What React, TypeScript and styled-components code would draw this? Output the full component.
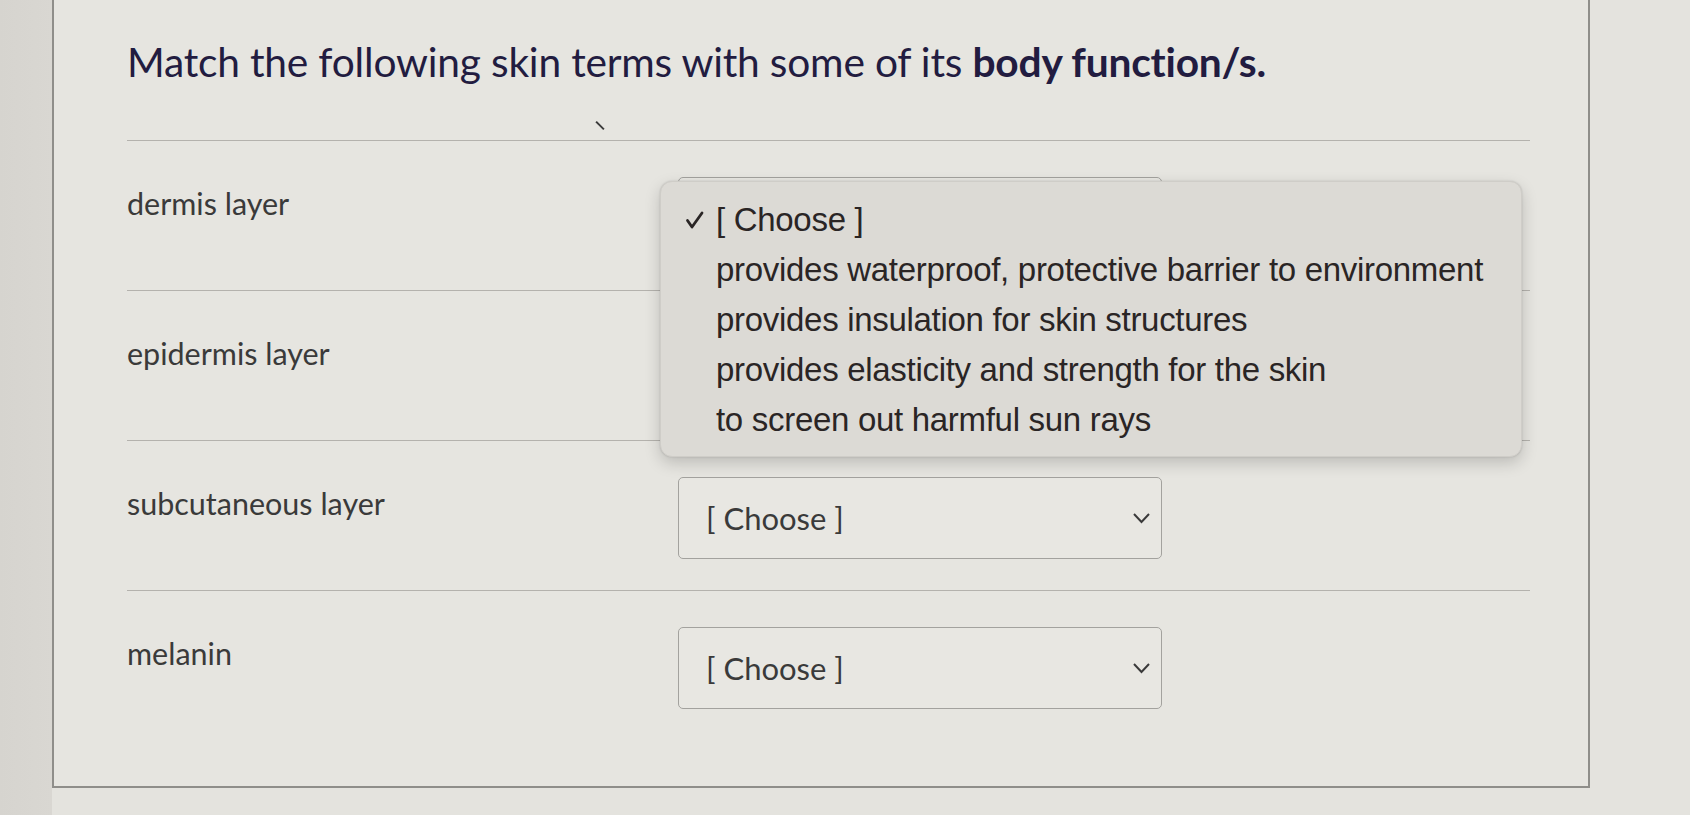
import React from "react";
import styled, { createGlobalStyle } from "styled-components";

const GlobalStyle = createGlobalStyle`
  html, body { margin: 0; padding: 0; }
  body {
    background: #d8d6d1;
    font-family: Lato, "Open Sans", sans-serif;
    overflow: hidden;
  }
`;

const Page = styled.div`
  width: 1690px;
  height: 815px;
  display: flex;
  align-items: flex-start;
  padding-left: 52px;
  box-sizing: border-box;
  background: linear-gradient(90deg, #d6d4cf 0px, #d9d7d2 52px, #e4e3de 52px);
`;

const Card = styled.div`
  position: relative;
  width: 1538px;
  height: 788px;
  box-sizing: border-box;
  background: #e6e5e0;
  border-left: 2px solid #8f8e8a;
  border-right: 2px solid #8f8e8a;
  border-bottom: 2px solid #8f8e8a;
  padding: 38px 58px 0 73px;
`;

const Title = styled.h1`
  margin: 0;
  font-family: Lato, "Open Sans", sans-serif;
  font-weight: 400;
  font-size: 40.7px;
  line-height: 48px;
  color: #221c40;
  letter-spacing: -0.2px;
  strong { font-weight: 700; }
`;

const Tick = styled.span`
  position: absolute;
  left: 545px;
  top: 120px;
  width: 2px;
  height: 11px;
  background: #3a3a3a;
  transform: rotate(-45deg);
`;

const List = styled.div`
  margin-top: 54px;
  display: flex;
  flex-direction: column;
`;

const Row = styled.div`
  display: flex;
  align-items: flex-start;
  border-top: 1.5px solid #b4b2ad;
  padding: 36px 0 31px;
`;

const Term = styled.div`
  width: 551px;
  margin-top: 8px;
  font-size: 30.5px;
  line-height: 36px;
  color: #3a3a3a;
`;

const SelectWrap = styled.div`
  position: relative;
`;

const SelectBox = styled.div`
  width: 484px;
  height: 82px;
  box-sizing: border-box;
  border: 1.5px solid #a3a29e;
  border-radius: 5px;
  background: #e8e7e2;
  display: flex;
  align-items: center;
  justify-content: space-between;
  padding: 0 10px 0 27px;
  font-size: 31px;
  color: #3a3a3a;
`;

const Chevron = styled.svg`
  width: 19px;
  height: 12px;
`;

const Menu = styled.div`
  position: absolute;
  left: -18px;
  top: 4px;
  width: 862px;
  box-sizing: border-box;
  padding: 13px 0 11px;
  background: #dcdad5;
  border: 1px solid #cfcdc8;
  border-radius: 12px;
  box-shadow: 0 6px 16px rgba(0, 0, 0, 0.18), 0 0 2px rgba(0, 0, 0, 0.15);
  z-index: 2;
`;

const MenuItem = styled.div`
  height: 50px;
  display: flex;
  align-items: center;
  padding-left: 24px;
  font-family: "Liberation Sans", Arial, sans-serif;
  font-size: 33px;
  color: #2a2525;
  letter-spacing: -0.3px;
`;

const CheckSlot = styled.span`
  width: 31px;
  display: flex;
  align-items: center;
`;

const terms = ["dermis layer", "epidermis layer", "subcutaneous layer", "melanin"];
const options = [
  "[ Choose ]",
  "provides waterproof, protective barrier to environment",
  "provides insulation for skin structures",
  "provides elasticity and strength for the skin",
  "to screen out harmful sun rays",
];

const ChevronIcon = () => (
  <Chevron viewBox="0 0 19 12">
    <polyline points="2,2 9.5,10 17,2" fill="none" stroke="#3a3a3a" strokeWidth="2" />
  </Chevron>
);

const Check = () => (
  <svg width="20" height="20" viewBox="0 0 20 20">
    <polyline points="2.5,10.5 7,17 17,3" fill="none" stroke="#2a2525" strokeWidth="2.8" strokeLinejoin="round" strokeLinecap="round" />
  </svg>
);

export default function App() {
  return (
    <>
      <GlobalStyle />
      <Page>
        <Card>
          <Title>
            Match the following skin terms with some of its <strong>body function/s.</strong>
          </Title>
          <Tick />
          <List>
            {terms.map((t, i) => (
              <Row key={t}>
                <Term>{t}</Term>
                <SelectWrap>
                  <SelectBox>
                    <span>[ Choose ]</span>
                    <ChevronIcon />
                  </SelectBox>
                  {i === 0 && (
                    <Menu>
                      {options.map((o, j) => (
                        <MenuItem key={o}>
                          <CheckSlot>{j === 0 && <Check />}</CheckSlot>
                          {o}
                        </MenuItem>
                      ))}
                    </Menu>
                  )}
                </SelectWrap>
              </Row>
            ))}
          </List>
        </Card>
      </Page>
    </>
  );
}
